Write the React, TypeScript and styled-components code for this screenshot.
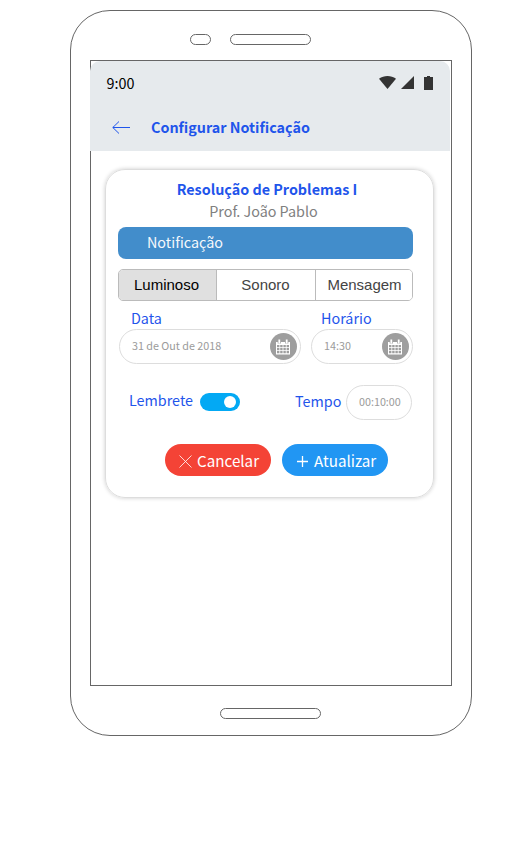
import React, { useState } from 'react';
import styled, { createGlobalStyle } from 'styled-components';

const GlobalStyle = createGlobalStyle`
  * { box-sizing: border-box; }
  body {
    margin: 0;
    background: #fff;
    font-family: "Noto Sans CJK SC", "Noto Sans", sans-serif;
    font-size: 14.35px;
    line-height: 20px;
  }
  button { font: inherit; padding: 0; margin: 0; border: 0; cursor: pointer; }
  svg { display: block; flex: none; }
`;

const blue = '#1f55eb';
const outline = '#666';

const Phone = styled.main`
  display: flex;
  flex-direction: column;
  width: 402px;
  height: 726px;
  margin: 10px 0 0 70px;
  padding: 0 19px;
  border: 1px solid ${outline};
  border-radius: 40px;
`;

const Earpiece = styled.div`
  display: flex;
  gap: 19px;
  height: 49px;
  padding: 23px 0 0 100.4px;
`;

const Slot = styled.div<{ $width: number }>`
  width: ${p => p.$width}px;
  height: 11px;
  border: 1px solid ${outline};
  border-radius: 6px;
`;

const Screen = styled.section`
  width: 362px;
  height: 626px;
  border: 1px solid ${outline};
`;

const Header = styled.header`
  width: 360px;
  height: 90px;
  margin-left: -1px;
  background: #e6eaed;
  border-radius: 10px 10px 0 0;
`;

const StatusBar = styled.div`
  display: flex;
  justify-content: space-between;
  padding: 12px 16px 0 16.5px;
  color: #000;
`;

const StatusIcons = styled.div`
  display: flex;
  padding-top: 3px;
`;

const TitleBar = styled.div`
  display: flex;
  align-items: center;
  gap: 20px;
  padding: 24px 0 0 22px;
`;

const BackButton = styled.button`
  padding-top: 2px;
  background: none;
`;

const PageTitle = styled.h1`
  margin: 0;
  font-size: 14.35px;
  line-height: 20px;
  font-weight: 700;
  color: ${blue};
`;

const Card = styled.article`
  width: 329px;
  height: 329px;
  margin: 18px 0 0 14px;
  padding: 9px 20px 0 12px;
  border: 1px solid #ddd;
  border-radius: 20px;
  box-shadow: 0 0 4px rgba(0, 0, 0, 0.2);
`;

const CourseName = styled.h2`
  margin: 0 0 2px;
  padding-left: 3px;
  text-align: center;
  font-size: 14.35px;
  line-height: 20px;
  font-weight: 700;
  color: ${blue};
`;

const Teacher = styled.p`
  margin: 0;
  text-align: center;
  padding-right: 4px;
  color: #808080;
`;

const Banner = styled.div`
  height: 32px;
  margin-top: 6px;
  padding-left: 29px;
  border-radius: 8px;
  background: #428dcb;
  color: #f5f9fc;
  line-height: 30px;
`;

const Segments = styled.div`
  display: grid;
  grid-template-columns: 98px 99px 1fr;
  height: 32px;
  margin-top: 10px;
  border: 1px solid #bbb;
  border-radius: 5px;
  overflow: hidden;
`;

const Segment = styled.button<{ $active: boolean }>`
  font: 15px/30px "Liberation Sans", Arial, sans-serif;
  background: ${p => (p.$active ? '#e0e0e0' : '#fff')};
  color: ${p => (p.$active ? '#000' : '#444')};
  border-right: 1px solid #bbb;
  &:first-child { padding-right: 2px; }
  &:nth-child(2) { padding-right: 1px; }
  &:last-child { border-right: 0; padding-left: 1px; }
`;

const Fields = styled.div`
  display: flex;
  gap: 10px;
  padding: 7px 0 0 1px;
`;

const Field = styled.div<{ $width: number }>`
  width: ${p => p.$width}px;
`;

const FieldLabel = styled.label<{ $indent: number }>`
  display: block;
  margin-bottom: 1px;
  padding-left: ${p => p.$indent}px;
  color: ${blue};
`;

const Pill = styled.div`
  display: flex;
  align-items: center;
  justify-content: space-between;
  height: 35px;
  padding: 0 3.5px 0 12px;
  border: 1px solid #ddd;
  border-radius: 18px;
  color: #9b9b9b;
  font-size: 10.76px;
  line-height: 16px;
`;

const PillValue = styled.span`
  padding-bottom: 2px;
`;

const CalendarButton = styled.button`
  display: grid;
  place-items: center;
  width: 27px;
  height: 27px;
  border-radius: 50%;
  background: #9e9e9e;
`;

const ReminderRow = styled.div`
  display: flex;
  align-items: center;
  height: 35px;
  margin-top: 21px;
  padding-left: 11px;
  color: ${blue};
`;

const ReminderLabel = styled.span`
  width: 71px;
  padding-bottom: 6px;
`;

const Toggle = styled.button<{ $on: boolean }>`
  display: flex;
  justify-content: ${p => (p.$on ? 'flex-end' : 'flex-start')};
  width: 40px;
  height: 18px;
  margin: 0 55px 1px 0;
  padding: 3px 4px;
  border-radius: 9px;
  background: ${p => (p.$on ? '#03a9f4' : '#bbb')};
`;

const Knob = styled.span`
  width: 12px;
  height: 12px;
  border-radius: 50%;
  background: #fff;
`;

const TimeLabel = styled.span`
  width: 51px;
  padding-bottom: 4px;
`;

const TimePill = styled(Pill)`
  width: 66px;
`;

const Actions = styled.div`
  display: flex;
  gap: 11px;
  padding: 24px 0 0 47px;
`;

const Action = styled.button<{ $color: string }>`
  display: flex;
  align-items: center;
  width: 106px;
  height: 32px;
  padding-left: 14px;
  border-radius: 16px;
  background: ${p => p.$color};
  color: #fff;
  font-size: 15.2px;
  line-height: 32px;
`;

const ActionIcon = styled.svg`
  margin: 3px 5px 0 0;
`;

const HomeSlot = styled(Slot)`
  margin: 22px 0 0 130.4px;
`;

const CalendarIcon = () => (
  <svg width="14" height="16" viewBox="0 0 14 16">
    <path d="M0 3h14v12.5H0z" fill="#fff" />
    <path d="M3.3 .5v4M10.7 .5v4" stroke="#9e9e9e" strokeWidth="3.2" />
    <path d="M3.3 .5v4M10.7 .5v4" stroke="#fff" strokeWidth="1.8" />
    <path
      d="M1 7.1h12M1 10.2h12M1 13.2h12"
      stroke="#9e9e9e"
      strokeWidth="2.2"
      strokeDasharray="2.4 .8"
    />
  </svg>
);

export default function App() {
  const [mode, setMode] = useState('Luminoso');
  const [reminder, setReminder] = useState(true);

  return (
    <>
      <GlobalStyle />
      <Phone>
        <Earpiece>
          <Slot $width={21} />
          <Slot $width={81} />
        </Earpiece>
        <Screen>
          <Header>
            <StatusBar>
              <span>9:00</span>
              <StatusIcons>
                <svg width="55" height="14" viewBox="0 0 55 14" fill="#333">
                  <path d="M0 2.8C5-.9 12-.9 17 2.8L8.5 13z" />
                  <path d="M35 0v13H22z" />
                  <path d="M45 1h3V0h3v1h3v13h-9z" />
                </svg>
              </StatusIcons>
            </StatusBar>
            <TitleBar>
              <BackButton aria-label="Voltar">
                <svg width="19" height="14" viewBox="0 0 19 14" fill="none" stroke={blue}>
                  <path d="M18 6.5H.8M7 .5l-6.2 6L7 12.5" />
                </svg>
              </BackButton>
              <PageTitle>Configurar Notificação</PageTitle>
            </TitleBar>
          </Header>
          <Card>
            <CourseName>Resolução de Problemas I</CourseName>
            <Teacher>Prof. João Pablo</Teacher>
            <Banner>Notificação</Banner>
            <Segments>
              {['Luminoso', 'Sonoro', 'Mensagem'].map(name => (
                <Segment key={name} $active={mode === name} onClick={() => setMode(name)}>
                  {name}
                </Segment>
              ))}
            </Segments>
            <Fields>
              <Field $width={182}>
                <FieldLabel $indent={12}>Data</FieldLabel>
                <Pill>
                  <PillValue>31 de Out de 2018</PillValue>
                  <CalendarButton aria-label="Escolher data"><CalendarIcon /></CalendarButton>
                </Pill>
              </Field>
              <Field $width={102}>
                <FieldLabel $indent={10}>Horário</FieldLabel>
                <Pill>
                  <PillValue>14:30</PillValue>
                  <CalendarButton aria-label="Escolher horário"><CalendarIcon /></CalendarButton>
                </Pill>
              </Field>
            </Fields>
            <ReminderRow>
              <ReminderLabel>Lembrete</ReminderLabel>
              <Toggle $on={reminder} aria-label="Lembrete" onClick={() => setReminder(!reminder)}>
                <Knob />
              </Toggle>
              <TimeLabel>Tempo</TimeLabel>
              <TimePill><PillValue>00:10:00</PillValue></TimePill>
            </ReminderRow>
            <Actions>
              <Action $color="#f44336">
                <ActionIcon width="13" height="13" viewBox="0 0 13 13" stroke="#fff" strokeWidth="0.8">
                  <path d="M.5.5l12 12M12.5.5l-12 12" />
                </ActionIcon>
                Cancelar
              </Action>
              <Action $color="#2196f3">
                <ActionIcon width="13" height="13" viewBox="0 0 13 13" stroke="#fff" strokeWidth="1.3">
                  <path d="M1 6.5h11M6.5 1v11" />
                </ActionIcon>
                Atualizar
              </Action>
            </Actions>
          </Card>
        </Screen>
        <HomeSlot $width={101} />
      </Phone>
    </>
  );
}
